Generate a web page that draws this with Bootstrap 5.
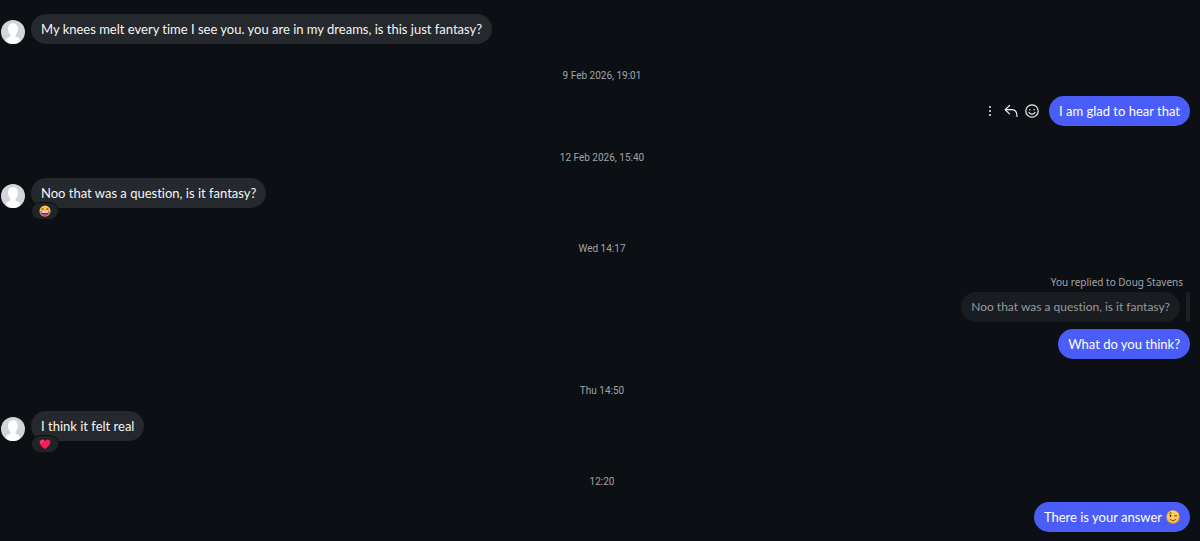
<!DOCTYPE html>
<html lang="en" data-bs-theme="dark">
<head>
<meta charset="utf-8">
<meta name="viewport" content="width=device-width, initial-scale=1">
<title>Chat</title>
<link href="https://cdn.jsdelivr.net/npm/bootstrap@5.3.0/dist/css/bootstrap.min.css" rel="stylesheet">
<style>
  body { background: #0c1014; color: #f5f5f5; font-family: Lato, "Noto Sans", sans-serif; font-size: 13px; line-height: 18px; font-variant-ligatures: none; }
  .thread { padding: 14px 10px 9px 1px; }
  .stamp { color: #a0a4a9; font-family: Roboto, sans-serif; font-size: 10px; line-height: 16px; padding: 24px 0 12px 13px; }
  .message { gap: 6px; }
  .avatar { width: 24px; height: 24px; }
  .bubble { background: #25282c; border-radius: 15px; padding: 6px 10px; }
  .bubble-own { background: #4a5df9; color: #fff; }
  .reacted { margin-bottom: 9px; }
  .reaction { left: 0; top: 24px; width: 28px; height: 18px; background: #212427; border: 1px solid #0c1014; border-radius: 9px; }
  .tool { color: #f0f0f0; line-height: 0; }
  .tools { gap: 7px; margin-right: 4px; }
  .reply-label { color: #a0a4a9; font-family: "Noto Sans", sans-serif; font-size: 10px; line-height: 20px; padding: 3px 7px 0 0; }
  .quote { gap: 6px; margin-bottom: 7px; }
  .quote-text { background: #191d21; color: #989a9d; font-size: 12px; }
  .quote-bar { width: 4px; background: #1c2023; border-radius: 2px; }
</style>
</head>
<body>
<svg class="d-none" aria-hidden="true">
  <symbol id="person" viewBox="0 0 24 24">
    <circle cx="12" cy="12" r="12" fill="#d2d4d8"/>
    <path d="M4.500 21.400c.3-3 1.800-3.800 4.900-4.700v-2.200C7.800 13.200 7 11.200 7 8.700 7 5.400 9 3.300 12 3.300s5 2.100 5 5.400c0 2.500-.8 4.500-2.400 5.800v2.200c3.100.9 4.600 1.700 4.900 4.700A12 12 0 0 1 4.500 21.400z" fill="#fff"/>
  </symbol>
</svg>
<main class="thread container-fluid">
  <div class="message d-flex align-items-end">
    <svg class="avatar flex-shrink-0" role="img" aria-label="Doug Stavens"><use href="#person"/></svg>
    <div class="bubble">My knees melt every time I see you. you are in my dreams, is this just fantasy?</div>
  </div>
  <div class="stamp text-center">9 Feb 2026, 19:01</div>
  <div class="message d-flex align-items-center justify-content-end">
    <div class="tools d-flex align-items-center">
      <button type="button" class="tool btn p-0 border-0" aria-label="More">
        <svg width="14" height="14" viewBox="0 0 14 14" fill="currentColor"><circle cx="7" cy="3" r="1"/><circle cx="7" cy="7" r="1"/><circle cx="7" cy="11" r="1"/></svg>
      </button>
      <button type="button" class="tool btn p-0 border-0" aria-label="Reply">
        <svg width="14" height="14" viewBox="0 0 14 14" fill="none" stroke="currentColor" stroke-width="1.200" stroke-linecap="round" stroke-linejoin="round"><path d="M5.500 1.500 1.200 5.700l4.300 4.200M1.500 5.700H8c3.300 0 5 2 5 6.800"/></svg>
      </button>
      <button type="button" class="tool btn p-0 border-0" aria-label="React">
        <svg width="14" height="14" viewBox="0 0 14 14" fill="none" stroke="currentColor" stroke-width="1.200" stroke-linecap="round"><circle cx="7" cy="7" r="6.200"/><path d="M4 8.500c1.300 2.200 4.700 2.200 6 0"/><g fill="currentColor" stroke="none"><circle cx="4.800" cy="5.700" r=".8"/><circle cx="9.200" cy="5.700" r=".8"/></g></svg>
      </button>
    </div>
    <div class="bubble bubble-own">I am glad to hear that</div>
  </div>
  <div class="stamp text-center">12 Feb 2026, 15:40</div>
  <div class="message reacted d-flex align-items-end">
    <svg class="avatar flex-shrink-0" role="img" aria-label="Doug Stavens"><use href="#person"/></svg>
    <div class="bubble position-relative">Noo that was a question, is it fantasy?
      <span class="reaction position-absolute d-flex align-items-center justify-content-center">
        <svg width="12" height="12" viewBox="0 0 12 12" role="img" aria-label="Laughing"><circle cx="6" cy="6" r="5.500" fill="#fbc04f"/><path d="m2.500 3 2 1-2 1M9.500 3l-2 1 2 1" fill="none" stroke="#a5472c" stroke-width=".8"/><path d="M1.600 6h8.800c0 3-1.900 4.700-4.400 4.700S1.600 9 1.600 6z" fill="#7b1f5c"/><path d="M2.200 6.200h7.600L9.300 7.700H2.700z" fill="#fff"/><path d="M3.800 9.800c.8-1.200 3.600-1.200 4.400 0-.8.900-3.600.9-4.400 0z" fill="#f0447c"/><path d="M.5 5.500c1.400.3 1.500 3 .5 3.500M11.500 5.500c-1.400.3-1.500 3-.5 3.500" fill="#a879e6"/></svg>
      </span>
    </div>
  </div>
  <div class="stamp text-center">Wed 14:17</div>
  <div class="reply-label text-end">You replied to Doug Stavens</div>
  <div class="quote d-flex justify-content-end">
    <div class="bubble quote-text">Noo that was a question, is it fantasy?</div>
    <span class="quote-bar flex-shrink-0"></span>
  </div>
  <div class="message d-flex justify-content-end">
    <div class="bubble bubble-own">What do you think?</div>
  </div>
  <div class="stamp text-center">Thu 14:50</div>
  <div class="message reacted d-flex align-items-end">
    <svg class="avatar flex-shrink-0" role="img" aria-label="Doug Stavens"><use href="#person"/></svg>
    <div class="bubble position-relative">I think it felt real
      <span class="reaction position-absolute d-flex align-items-center justify-content-center">
        <svg width="12" height="12" viewBox="0 0 12 12" role="img" aria-label="Heart"><path d="M6 11C3 8.800.6 6.700.6 4.200.6 1.200 4.600.5 6 3.100 7.400.5 11.400 1.200 11.400 4.200 11.400 6.700 9 8.800 6 11z" fill="#f51f56"/><path d="M2 4.500C1.900 3 3.300 2.300 4.300 2.900" fill="none" stroke="#ff7195" stroke-linecap="round"/></svg>
      </span>
    </div>
  </div>
  <div class="stamp text-center">12:20</div>
  <div class="message d-flex justify-content-end">
    <div class="bubble bubble-own d-flex align-items-center gap-1">There is your answer
      <svg width="14" height="14" viewBox="0 0 14 14" role="img" aria-label="Winking"><circle cx="7" cy="7" r="6.700" fill="#f5a52f"/><circle cx="7" cy="6.200" r="5.800" fill="#ffcf5a"/><ellipse cx="4.500" cy="5.800" rx=".9" ry="1.300" fill="#51301d"/><path d="M8.300 6.200c.8-1 2.100-1 2.800-.1M3.200 3.500c.5-.7 1.400-1 2.100-.7M4 9.100c1.500 2 4.500 2 6 0" fill="none" stroke="#51301d" stroke-width=".9" stroke-linecap="round"/></svg>
    </div>
  </div>
</main>
<script src="https://cdn.jsdelivr.net/npm/bootstrap@5.3.0/dist/js/bootstrap.bundle.min.js"></script>
</body>
</html>
